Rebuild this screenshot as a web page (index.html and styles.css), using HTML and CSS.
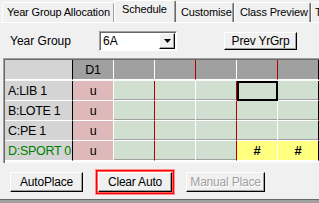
FILE: index.html
```html
<!DOCTYPE html>
<html>
<head>
<meta charset="utf-8">
<link rel="stylesheet" href="styles.css">
</head>
<body>
<div class="win">
  <div class="tabs">
    <div class="tab t1">Year Group Allocation</div>
    <div class="tab sel">Schedule</div>
    <div class="tab t3">Customise</div>
    <div class="tab t4">Class Preview</div>
    <div class="tab t5">T</div>
  </div>
  <div class="panel">
    <div class="toprow">
      <span class="lbl">Year Group</span>
      <div class="combo"><span class="val">6A</span><span class="drop"><svg width="7" height="4" viewBox="0 0 7 4"><path d="M0 0h7L3.5 4z" fill="#000"/></svg></span></div>
      <button class="btn prev">Prev YrGrp</button>
    </div>
    <div class="grid">
      <div class="c hl lab"></div>
      <div class="c hd">D1</div>
      <div class="c hd"></div>
      <div class="c hd red"></div>
      <div class="c hd"></div>
      <div class="c hd red"></div>
      <div class="c hd last"></div>

      <div class="c lab">A:LIB 1</div>
      <div class="c pk">u</div>
      <div class="c gr red"></div>
      <div class="c gr"></div>
      <div class="c gr red"></div>
      <div class="c gr selc"></div>
      <div class="c gr last"></div>

      <div class="c lab">B:LOTE 1</div>
      <div class="c pk">u</div>
      <div class="c gr red"></div>
      <div class="c gr"></div>
      <div class="c gr red"></div>
      <div class="c gr"></div>
      <div class="c gr last"></div>

      <div class="c lab">C:PE 1</div>
      <div class="c pk">u</div>
      <div class="c gr red"></div>
      <div class="c gr"></div>
      <div class="c gr red"></div>
      <div class="c gr"></div>
      <div class="c gr last"></div>

      <div class="c lab green">D:SPORT 0</div>
      <div class="c pk">u</div>
      <div class="c gr red"></div>
      <div class="c gr"></div>
      <div class="c gr red"></div>
      <div class="c yl">#</div>
      <div class="c yl last">#</div>
    </div>
    <div class="btnrow">
      <button class="btn auto">AutoPlace</button>
      <div class="focus"><button class="btn clear">Clear Auto</button></div>
      <button class="btn manual" disabled>Manual Place</button>
    </div>
  </div>
</div>
</body>
</html>
```
FILE: styles.css
```css
* { box-sizing: border-box; }
html, body { margin: 0; padding: 0; }
body {
  width: 319px; height: 203px; overflow: hidden;
  background: #f0f0f0;
  font-family: "Liberation Sans", Arial, sans-serif;
  font-size: 11px;
  color: #000;
  white-space: nowrap;
}
.win { width: 319px; height: 203px; display: flex; flex-direction: column; }
.tabs {
  display: flex; align-items: flex-end; height: 22px; padding-left: 2px;
}
.tab {
  height: 20px; padding: 0 0 0 4px; line-height: 18px;
  border-left: 1px solid #fff; border-top: 1px solid #fff;
  border-right: 1px solid #696969; box-shadow: inset -1px 0 0 #a0a0a0;
  background: #f0f0f0; font-size: 11px; letter-spacing: -0.15px;
  flex: none;
  border-radius: 2px 2px 0 0;
}
.t1 { width: 113px; }
.sel { height: 22px; width: 62px; margin-left: -1px; margin-right: -1px; position: relative; z-index: 1; line-height: 17px; padding-left: 7px; }
.t3 { width: 59px; padding-left: 5px; }
.t4 { width: 77px; padding-left: 5px; }
.t5 { width: 20px; padding-left: 3px; }
.panel {
  flex: 1; border-top: 1px solid #fff; display: flex; flex-direction: column;
  border-bottom: 3px solid #a0a0a0;
  box-shadow: inset 0 -1px 0 #696969;
}
.toprow { height: 35px; display: flex; align-items: center; padding-left: 10px; font-size: 12px; }
.lbl { width: 89px; }
.combo {
  width: 78px; height: 20px; background: #fff;
  border-top: 1px solid #a0a0a0; border-left: 1px solid #a0a0a0;
  border-right: 1px solid #fff; border-bottom: 1px solid #fff;
  box-shadow: inset 1px 1px 0 #696969;
  display: flex; justify-content: space-between; align-items: center;
  margin-top: 1px;
}
.val { padding-left: 3px; }
.drop {
  width: 16px; height: 16px; margin-right: 1px; background: #f0f0f0;
  border-top: 1px solid #fff; border-left: 1px solid #fff;
  border-right: 1px solid #000; border-bottom: 1px solid #000;
  box-shadow: inset -1px -1px 0 #a0a0a0;
  display: flex; align-items: center; justify-content: center;
}
.btn {
  font-family: "Liberation Sans", Arial, sans-serif; font-size: 12px;
  letter-spacing: -0.2px;
  background: #f0f0f0; color: #000; padding: 0;
  border-top: 1px solid #fff; border-left: 1px solid #fff;
  border-right: 1px solid #000; border-bottom: 1px solid #000;
  box-shadow: inset -1px -1px 0 #a0a0a0;
  border-radius: 0; white-space: nowrap;
}
.prev { width: 73px; height: 18px; margin-left: 47px; }
.grid {
  margin-left: 3px; margin-top: 0;
  display: grid; grid-template-columns: 68px repeat(6, 41px);
  grid-auto-rows: 20px;
  border-top: 1px solid #a0a0a0; border-left: 1px solid #a0a0a0;
  box-shadow: inset 1px 1px 0 #696969;
  padding: 2px 0 2px 1px;
  background: #fafafa;
  width: 320px;
}
.c {
  border-right: 1px solid #fff; border-bottom: 1px solid #fff;
  display: flex; align-items: center; justify-content: center;
  font-size: 12.5px; letter-spacing: -0.3px; color: #000;
}
.grid > .c:nth-child(-n+7) { margin-top: -1px; height: 20px; }
.lab { justify-content: flex-start; padding-left: 3px; background: #d4d4d4; border-right: 1px solid #000; overflow: hidden; }
.hd { background: #a0a0a0; }
.pk { background: #dfb9b9; }
.gr { background: #d0dfd0; box-shadow: inset 0 -1px 0 #a0a0a0; }
.gr.red, .hd.red { border-right-color: #b00000; }
.yl { background: #ffff80; font-weight: bold; font-size: 13px; }
.last { border-right: 1px solid #000; }
.lab.green { color: #008000; }
.selc { border: 2px solid #000; box-shadow: none; }
.btnrow { display: flex; align-items: center; padding-left: 10px; margin-top: 7px; }
.auto { width: 73px; height: 20px; }
.focus {
  margin-left: 13px; padding: 1px;
  border: 1px solid #ff0000; box-shadow: 0 0 0 1px #ff9090, inset 0 0 0 1px #ff6060;
}
.clear { width: 74px; height: 20px; display: block; }
.manual { width: 79px; height: 20px; margin-left: 12px; color: #a0a0a0; text-shadow: 1px 1px 0 #fff; }
```
